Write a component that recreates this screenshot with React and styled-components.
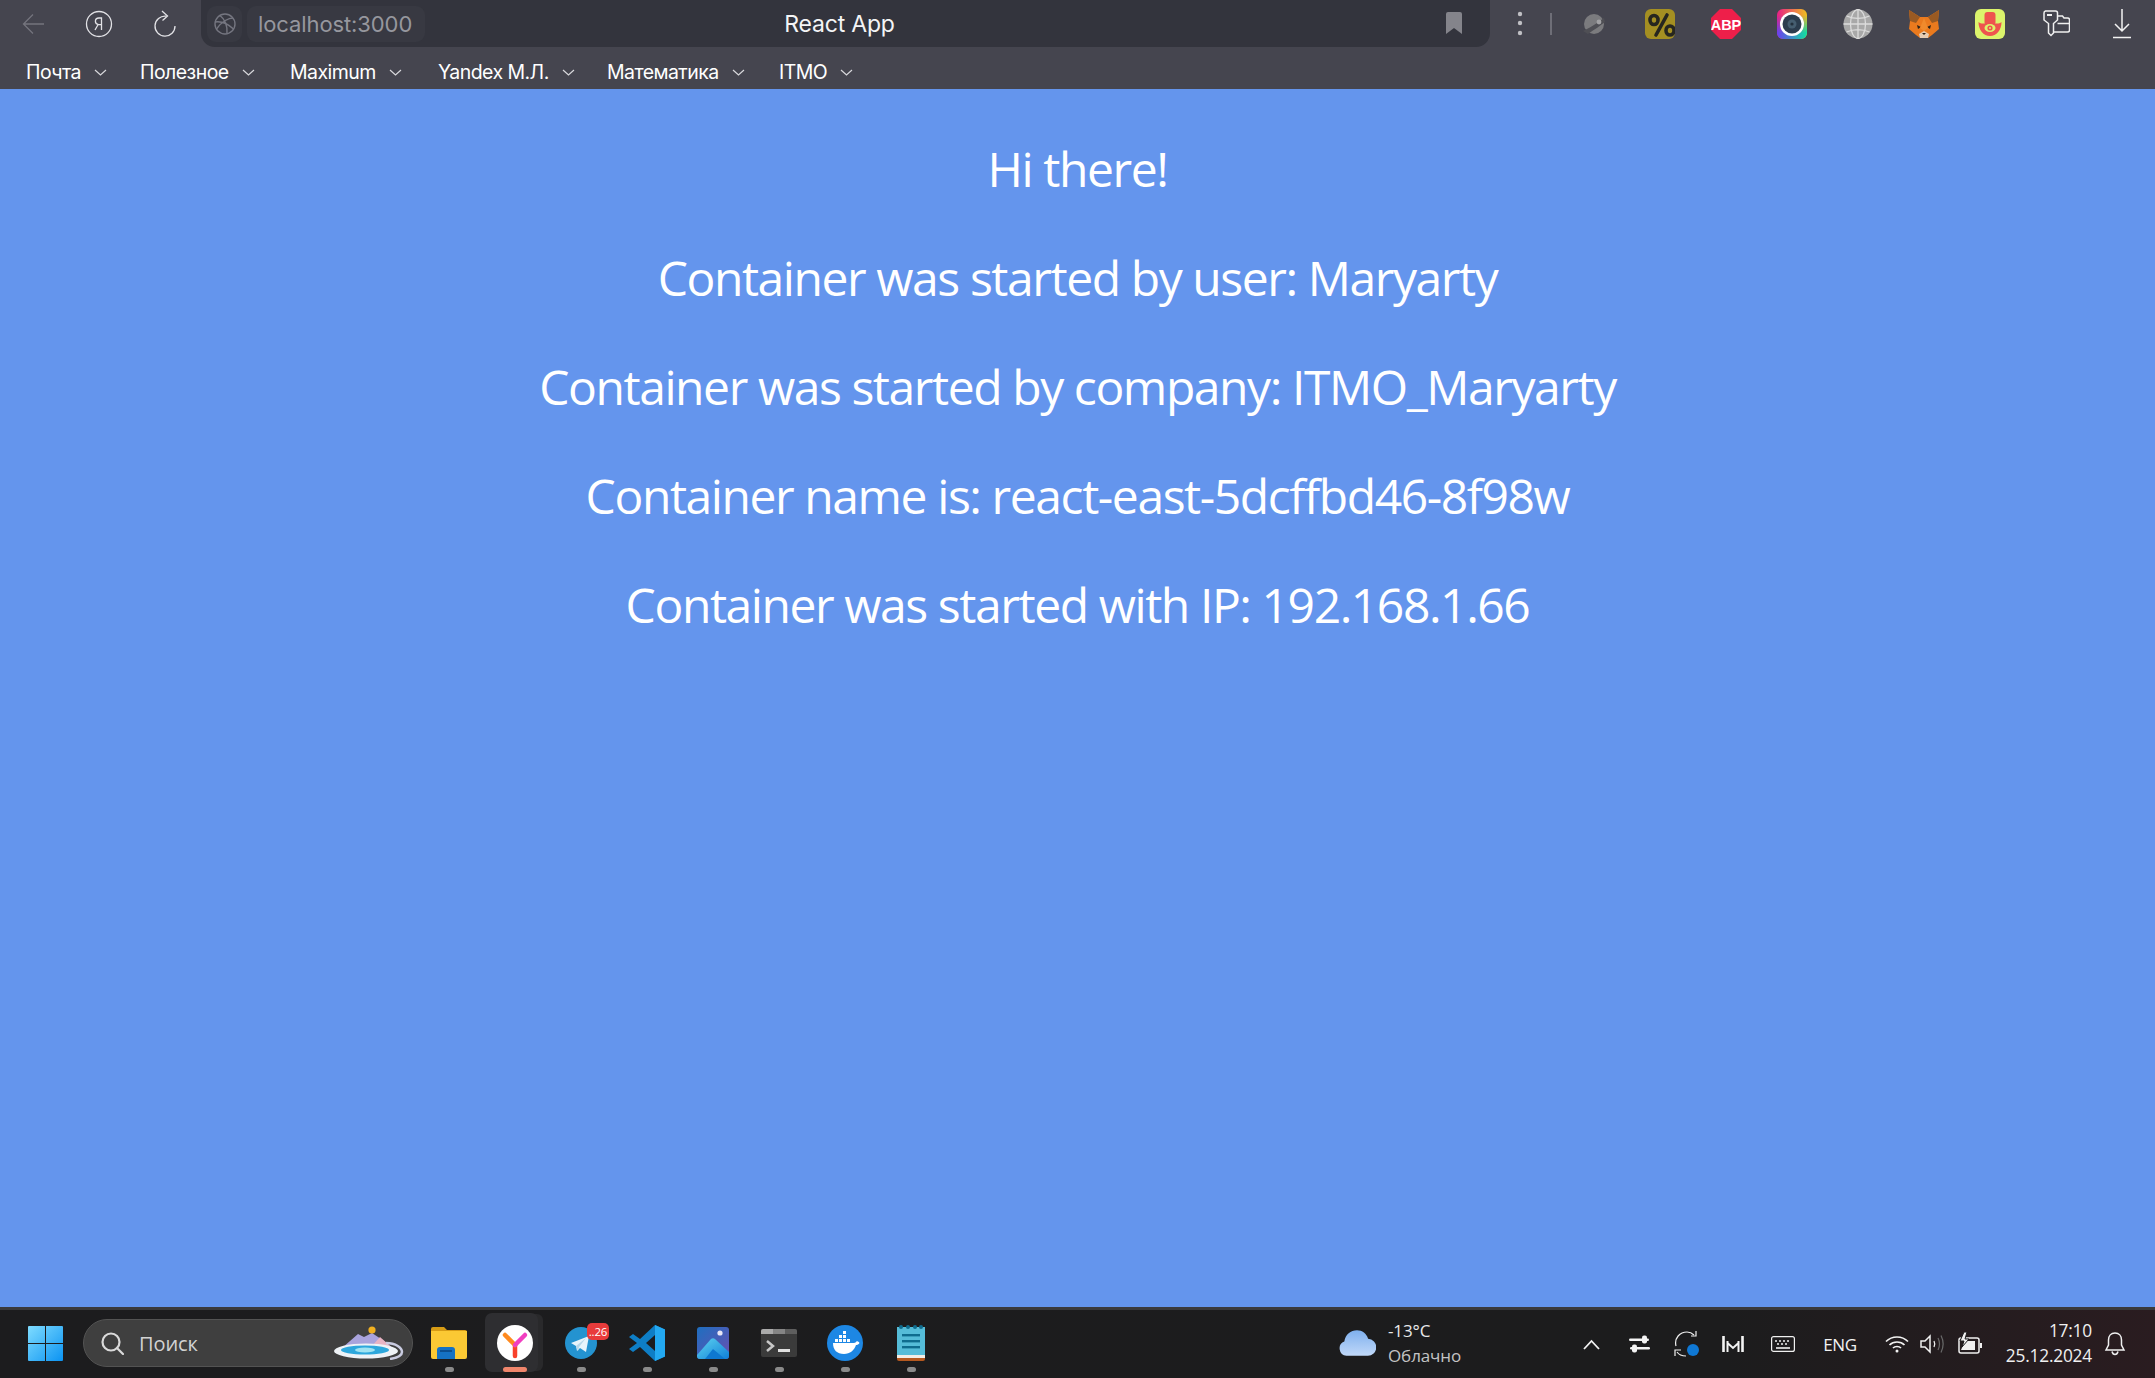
import React from "react";
import styled, { createGlobalStyle } from "styled-components";

const Global = createGlobalStyle`
  html, body { margin: 0; padding: 0; background: #6495ed; }
  body { overflow: hidden; }
  * { box-sizing: border-box; }
  svg { display: block; }
`;

const Page = styled.div`
  width: 2155px;
  height: 1378px;
  display: flex;
  flex-direction: column;
  font-family: "Inter", "Liberation Sans", sans-serif;
`;

/* ---------- browser chrome ---------- */
const Chrome = styled.header`
  height: 89px;
  flex: none;
  background: #45454f;
  display: flex;
  flex-direction: column;
`;
const ToolRow = styled.div`
  height: 47px;
  display: flex;
  align-items: stretch;
`;
const ToolSlot = styled.div`
  width: ${(p) => p.$w || 66}px;
  flex: none;
  display: flex;
  align-items: center;
  justify-content: center;
`;
const AddressBar = styled.div`
  width: 1289px;
  margin-left: 3px;
  flex: none;
  background: #33343d;
  border-radius: 0 0 14px 14px;
  display: grid;
  grid-template-columns: 1fr auto 1fr;
  align-items: center;
  padding: 0 18px 0 6px;
`;
const AddressLeft = styled.div`
  display: flex;
  gap: 5px;
  align-items: center;
`;
const Chip = styled.div`
  height: 36px;
  background: #383942;
  border-radius: 9px;
  display: flex;
  align-items: center;
`;
const GlobeChip = styled(Chip)`
  width: 35px;
  justify-content: center;
`;
const UrlChip = styled(Chip)`
  width: 178px;
  padding-left: 11px;
  color: #96979e;
  font-size: 22px;
  letter-spacing: -0.1px;
`;
const PageTitle = styled.div`
  color: #f4f4f6;
  font-size: 23px;
  letter-spacing: -0.2px;
`;
const BookmarkSlot = styled.div`
  justify-self: end;
  margin-right: 10px;
`;
const Separator = styled.div`
  width: 2px;
  height: 22px;
  background: #6e6e77;
  align-self: center;
  margin-right: 9px;
  flex: none;
`;
const BookmarkRow = styled.nav`
  height: 42px;
  display: flex;
  align-items: flex-start;
  padding: 12px 0 0 26px;
`;
const BookmarkItem = styled.div`
  width: ${(p) => p.$w}px;
  height: 26px;
  flex: none;
  display: flex;
  align-items: center;
  gap: 13px;
  color: #fff;
  font-size: 19.5px;
  letter-spacing: -0.55px;
`;

/* ---------- content ---------- */
const Main = styled.main`
  flex: 1;
  background: #6495ed;
  padding-top: 48px;
  display: flex;
  flex-direction: column;
  gap: 45px;
`;
const Line = styled.p`
  margin: 0;
  font-family: "Open Sans", "Noto Sans", sans-serif;
  font-weight: 400;
  font-size: 48px;
  line-height: 64px;
  letter-spacing: -1.42px;
  color: #fff;
  text-align: center;
`;

/* ---------- taskbar ---------- */
const Taskbar = styled.footer`
  height: 71px;
  flex: none;
  border-top: 3px solid #3a3a3c;
  background: linear-gradient(90deg, #1c1c1e 0%, #1c1c1d 80%, #2a1c20 100%);
  display: flex;
  align-items: flex-start;
  padding-left: 12px;
`;
const StartSlot = styled.div`
  width: 66px;
  padding-top: 16px;
  display: flex;
  justify-content: center;
  flex: none;
`;
const SearchPill = styled.div`
  width: 330px;
  height: 48px;
  margin: 9px 3px 0 5px;
  flex: none;
  border-radius: 24px;
  background: #3f3f3f;
  border: 1px solid #535353;
  display: flex;
  align-items: center;
  padding: 0 8px 0 17px;
  color: #d2d2d2;
  font-family: "Open Sans", sans-serif;
  font-size: 20px;
  letter-spacing: -0.1px;
`;
const SearchLabel = styled.span`
  margin-left: 15px;
  flex: 1;
`;
const AppSlot = styled.div`
  position: relative;
  width: 66px;
  flex: none;
  padding-top: 15px;
  display: flex;
  flex-direction: column;
  align-items: center;
`;
const ActiveTile = styled.div`
  position: absolute;
  left: 3px;
  top: 3px;
  width: 53px;
  height: 59px;
  border-radius: 7px;
  background: #2e2e31;
  box-shadow: 6px 0 0 -1px #29292b;
`;
const AppIcon = styled.div`
  position: relative;
  width: 38px;
  height: 36px;
  display: flex;
  align-items: center;
  justify-content: center;
`;
const RunDot = styled.div`
  position: relative;
  margin-top: 6px;
  width: ${(p) => (p.$active ? 24 : 9)}px;
  height: 5px;
  border-radius: 3px;
  background: ${(p) => (p.$active ? "#f0866c" : "#8a8a8a")};
`;
const Badge = styled.span`
  position: absolute;
  right: -9px;
  top: -2px;
  width: 22px;
  height: 17px;
  border-radius: 5px;
  background: #e83b3b;
  color: #fff;
  font-family: "Open Sans", sans-serif;
  font-size: 11.5px;
  line-height: 17px;
  text-align: center;
  letter-spacing: -0.2px;
`;
const Weather = styled.div`
  margin-left: 394px;
  width: 229px;
  height: 66px;
  flex: none;
  display: flex;
  align-items: center;
  gap: 12px;
`;
const WeatherText = styled.div`
  display: flex;
  flex-direction: column;
  gap: 3px;
  font-family: "Open Sans", sans-serif;
  font-size: 17px;
  line-height: 22px;
  letter-spacing: -0.1px;
`;
const Temp = styled.span`
  color: #e8e8e8;
`;
const Sky = styled.span`
  color: #c4c4c4;
`;
const TraySlot = styled.div`
  width: ${(p) => p.$w}px;
  margin-left: ${(p) => p.$ml || 0}px;
  height: 68px;
  flex: none;
  display: flex;
  align-items: center;
  justify-content: center;
  color: #f2f2f2;
  font-family: "Open Sans", sans-serif;
  font-size: 17px;
  letter-spacing: -0.3px;
`;
const Clock = styled.div`
  width: 101px;
  height: 67px;
  flex: none;
  display: flex;
  flex-direction: column;
  justify-content: center;
  align-items: flex-end;
  gap: 3px;
  color: #f0f0f0;
  font-family: "Open Sans", sans-serif;
  font-size: 17.3px;
  line-height: 22px;
  letter-spacing: -0.2px;
`;

/* ---------- icons ---------- */
const Chevron = () => (
  <svg width="13" height="7" viewBox="0 0 13 7" fill="none" stroke="#d8d8dc" strokeWidth="1.2">
    <path d="M1 1l5.500 5L12 1" />
  </svg>
);
const BackIcon = () => (
  <svg width="22" height="22" viewBox="0 0 22 22" fill="none" stroke="#74747d" strokeWidth="1.3">
    <path d="M22 11H2M11 1.500L1.500 11l9.500 9.500" />
  </svg>
);
const YaIcon = () => (
  <svg width="28" height="28" viewBox="0 0 28 28" fill="none" stroke="#e2e2e6" strokeWidth="1.3">
    <circle cx="14" cy="14" r="12.500" />
    <path d="M16.500 20V8h-2.600c-2.200 0-3.500 1.400-3.500 3.300s1.200 3.100 3.200 3.300h2.900M13 14.800L10 20" />
  </svg>
);
const ReloadIcon = () => (
  <svg width="24" height="28" viewBox="0 0 24 28" fill="none" stroke="#e2e2e6" strokeWidth="1.300">
    <path d="M13 6.200A10 10 0 1 0 22 16" />
    <path d="M9 1l5.500 5-5 4.500" />
  </svg>
);
const GlobeIcon = () => (
  <svg width="22" height="22" viewBox="0 0 22 22" fill="none" stroke="#757680" strokeWidth="1.400">
    <circle cx="11" cy="11" r="10" />
    <path d="M6 2.500c4 3 7.500 9 7 18M19 5c-4 0-11 3-16.500 11M1 9c6-1 13 2 18.500 7" />
  </svg>
);
const BookmarkIcon = () => (
  <svg width="16" height="24" viewBox="0 0 16 24">
    <path d="M2 0h12a2 2 0 0 1 2 2v20l-8-6-8 6V2a2 2 0 0 1 2-2z" fill="#84848b" />
  </svg>
);
const DotsIcon = () => (
  <svg width="6" height="28" viewBox="0 0 6 28" fill="#c0c0c4">
    <circle cx="3" cy="4" r="2.200" />
    <circle cx="3" cy="13" r="2.200" />
    <circle cx="3" cy="23" r="2.200" />
  </svg>
);
const PlanetIcon = () => (
  <svg width="22" height="22" viewBox="0 0 22 22">
    <circle cx="11" cy="11" r="10" fill="#7b7b7e" />
    <path d="M0 18C6 15 15 10 21 5l1 4c-5 4-10 7-17 12z" fill="#4f4f55" />
    <circle cx="16" cy="9" r="2.400" fill="#a2a2a5" />
  </svg>
);
const PercentTile = () => (
  <svg width="30" height="30" viewBox="0 0 30 30">
    <rect width="30" height="30" rx="6" fill="#a48f22" />
    <g fill="none" stroke="#26261f" strokeWidth="3.600" strokeLinecap="round">
      <ellipse cx="9" cy="11" rx="4" ry="4.500" />
      <ellipse cx="25" cy="21.500" rx="4" ry="4.500" />
      <path d="M22 6L11 26" />
    </g>
  </svg>
);
const AbpIcon = () => (
  <svg width="30" height="30" viewBox="0 0 30 30">
    <path d="M9 0h12l9 9v12l-9 9H9l-9-9V9z" fill="#ee1f4a" />
    <text x="15" y="20.500" textAnchor="middle" fontFamily="Liberation Sans" fontWeight="700" fontSize="14.500" fill="#fff" letterSpacing="-0.1">ABP</text>
  </svg>
);
const LensIcon = () => (
  <svg width="30" height="30" viewBox="0 0 30 30">
    <defs>
      <linearGradient id="lensTop" x1="0" y1="0" x2="1" y2="0">
        <stop offset="0" stopColor="#e81e86" />
        <stop offset="1" stopColor="#f0c020" />
      </linearGradient>
      <linearGradient id="lensBottom" x1="0" y1="0" x2="1" y2="0">
        <stop offset="0" stopColor="#6a3ef0" />
        <stop offset="1" stopColor="#10e0a0" />
      </linearGradient>
      <linearGradient id="lensFade" x1="0" y1="0" x2="0" y2="1">
        <stop offset="0.2" stopColor="#000" />
        <stop offset="0.8" stopColor="#fff" />
      </linearGradient>
      <mask id="lensMask">
        <rect width="30" height="30" fill="url(#lensFade)" />
      </mask>
    </defs>
    <rect width="30" height="30" rx="6" fill="url(#lensTop)" />
    <rect width="30" height="30" rx="6" fill="url(#lensBottom)" mask="url(#lensMask)" />
    <circle cx="15" cy="15" r="12" fill="#fff" />
    <circle cx="15" cy="15" r="9.500" fill="#2b3d4e" />
    <circle cx="15" cy="15" r="4.500" fill="#455e70" />
    <circle cx="15" cy="15" r="1.600" fill="#22303c" />
  </svg>
);
const WebIcon = () => (
  <svg width="30" height="30" viewBox="0 0 30 30" fill="none">
    <circle cx="15" cy="15" r="14.500" fill="#a8a8a8" />
    <g stroke="#dcdcdc" strokeWidth="1.300">
      <path d="M15 .5v29M.5 15h29M3.500 7c7 3 16 3 23 0M3.500 23c7-3 16-3 23 0" />
      <ellipse cx="15" cy="15" rx="7.500" ry="14.500" />
    </g>
  </svg>
);
const FoxIcon = () => (
  <svg width="30" height="30" viewBox="0 0 30 30">
    <path d="M0 1l11 7h8L30 1l-1 11 1 8-7 6-4 3h-8l-4-3-7-6 1-8z" fill="#ea7a1e" />
    <path d="M0 1l11 7-4 6-6-2zM30 1L19 8l4 6 6-2z" fill="#9a5a22" />
    <path d="M11 29l-1-4 5-3 5 3-1 4z" fill="#e6ccb2" />
    <path d="M8 16l4 2-3 2zM22 16l-4 2 3 2z" fill="#2d2218" />
    <path d="M13 24h4l-2 2z" fill="#2d2218" />
    <path d="M15 9l-4 10 4 3 4-3z" fill="#f08a2c" />
  </svg>
);
const HandIcon = () => (
  <svg width="30" height="30" viewBox="0 0 30 30">
    <rect width="30" height="30" rx="6" fill="#dcf46c" />
    <rect x="9.500" y="3" width="11" height="13" rx="3" fill="#ee544e" />
    <path d="M3.500 13c3 2.500 6 1 11.500 1s8.500 1.500 11.500-1c0 8-5 14-11.500 14S3.500 21 3.500 13z" fill="#ee544e" />
    <ellipse cx="15" cy="19" rx="5.500" ry="4" fill="#dcf46c" />
    <circle cx="15" cy="19" r="2.600" fill="#ee544e" />
    <circle cx="15" cy="19" r="1" fill="#dcf46c" />
  </svg>
);
const KeyIcon = () => (
  <svg width="27" height="27" viewBox="0 0 27 27" fill="none" stroke="#f0f0f0" strokeWidth="1.500">
    <path d="M2.500 1h10a2 2 0 0 1 2 2v7l-4 3.500V23L8 25.500 5.500 23V13.500L1 10V3a2 2 0 0 1 1.500-2z" />
    <path d="M4 5h5" strokeWidth="2" />
    <path d="M14.500 6h5l1.500 2h3.500a2 2 0 0 1 2 2v10a2 2 0 0 1-2 2h-14" />
    <path d="M14.500 13.500H26" />
  </svg>
);
const DownloadIcon = () => (
  <svg width="20" height="30" viewBox="0 0 20 30" fill="none" stroke="#f2f2f2" strokeWidth="1.500">
    <path d="M10 0v22M3 15l7 7 7-7M1 28.500h18" />
  </svg>
);

const WinLogo = () => (
  <svg width="35" height="35" viewBox="0 0 35 35">
    <defs>
      <linearGradient id="winG" x1="0" y1="0" x2="1" y2="1">
        <stop offset="0" stopColor="#7fdcff" />
        <stop offset="1" stopColor="#0b93f2" />
      </linearGradient>
    </defs>
    <path d="M1 0h16v17H0V1a1 1 0 0 1 1-1zM18 0h16a1 1 0 0 1 1 1v16H18zM0 18h17v17H1a1 1 0 0 1-1-1zM18 18h17v16a1 1 0 0 1-1 1H18z" fill="url(#winG)" />
  </svg>
);
const SearchGlass = () => (
  <svg width="23" height="23" viewBox="0 0 23 23" fill="none" stroke="#dadada" strokeWidth="2.200">
    <circle cx="10" cy="10" r="8.500" />
    <path d="M16 16l6 6" strokeLinecap="round" />
  </svg>
);
const SearchScene = () => (
  <svg width="70" height="34" viewBox="0 0 70 34">
    <path d="M8 22l16-14 6 3 8-4 12 8 10 8z" fill="#a9a3dc" />
    <path d="M38 20l8-9 8 7 6 6z" fill="#e8b4c4" />
    <circle cx="38" cy="4" r="3.600" fill="#f0b020" />
    <ellipse cx="32" cy="25" rx="32" ry="7.500" fill="#eef2f6" />
    <ellipse cx="31" cy="24" rx="24" ry="4.600" fill="#2da7dc" />
    <ellipse cx="31" cy="24" rx="10" ry="2.600" fill="#9fe3f2" />
    <path d="M52 17c10 0 16 5 16 9s-6 6-12 7" fill="none" stroke="#c9cbe0" strokeWidth="2.500" />
  </svg>
);
const FolderIcon = () => (
  <svg width="36" height="32" viewBox="0 0 36 32">
    <path d="M2 0h11l3 3h18a2 2 0 0 1 2 2v4H0V2a2 2 0 0 1 2-2z" fill="#d79c15" />
    <path d="M0 4h36v26a2 2 0 0 1-2 2H2a2 2 0 0 1-2-2z" fill="#fbc934" />
    <path d="M6 32v-9a3 3 0 0 1 3-3h12a3 3 0 0 1 3 3v9z" fill="#1572c4" />
    <path d="M9 24h12" stroke="#0c4f90" strokeWidth="2" />
  </svg>
);
const YandexIcon = () => (
  <svg width="36" height="36" viewBox="0 0 36 36" fill="none">
    <circle cx="18" cy="18" r="18" fill="#fff" />
    <path d="M18 20V31" stroke="#f8412b" strokeWidth="4.500" strokeLinecap="round" />
    <path d="M8 10l10 10" stroke="#ff8a1f" strokeWidth="4.500" strokeLinecap="round" />
    <path d="M28 10L18 20" stroke="#f13fc0" strokeWidth="4.500" strokeLinecap="round" />
  </svg>
);
const TelegramIcon = () => (
  <svg width="32" height="32" viewBox="0 0 32 32">
    <circle cx="16" cy="16" r="16" fill="#2493d0" />
    <path d="M6 16l18-7-3 16-6-4-3 3-1-5z" fill="#e8f4fb" />
    <path d="M11 19l10-8-7 9-1 4z" fill="#b8d8ea" />
  </svg>
);
const VsCodeIcon = () => (
  <svg width="36" height="36" viewBox="0 0 36 36">
    <path d="M26 0l10 4.500v27L26 36 11 22l-7 5-4-3 8-6-8-6 4-3 7 5z" fill="#0e7ec6" />
    <path d="M26 0l10 4.500v27L26 36z" fill="#23a9f2" />
    <path d="M26 10l-9 8 9 8z" fill="#1c1c1e" />
  </svg>
);
const PhotosIcon = () => (
  <svg width="32" height="32" viewBox="0 0 32 32">
    <defs>
      <linearGradient id="phG" x1="0" y1="0" x2="1" y2="1">
        <stop offset="0" stopColor="#1e6fc0" />
        <stop offset="1" stopColor="#6a4fb0" />
      </linearGradient>
      <linearGradient id="phM" x1="0" y1="0" x2="1" y2="1">
        <stop offset="0" stopColor="#5fd4f0" />
        <stop offset="1" stopColor="#0f7fd8" />
      </linearGradient>
    </defs>
    <rect width="32" height="32" rx="3" fill="url(#phG)" />
    <circle cx="23" cy="6" r="2.600" fill="#e8e6f6" />
    <path d="M0 28l14-16c1-1 3-1 4 0l14 13v4a3 3 0 0 1-3 3H3a3 3 0 0 1-3-3z" fill="url(#phM)" />
    <path d="M8 32l8-10 12 10z" fill="#0e78d0" />
  </svg>
);
const TerminalIcon = () => (
  <svg width="36" height="28" viewBox="0 0 36 28">
    <rect width="36" height="28" rx="2" fill="#3b3b3b" />
    <path d="M0 2a2 2 0 0 1 2-2h10v5H0z" fill="#aaa" />
    <path d="M12 0h12v5H12z" fill="#858585" />
    <path d="M24 0h10a2 2 0 0 1 2 2v3H24z" fill="#5e5e5e" />
    <path d="M6 12l6 5-6 5" fill="none" stroke="#c8c8c8" strokeWidth="2.500" />
    <path d="M17 20h12v3H17z" fill="#e0e0e0" />
  </svg>
);
const DockerIcon = () => (
  <svg width="36" height="36" viewBox="0 0 36 36">
    <circle cx="18" cy="18" r="18" fill="#1d87e4" />
    <path d="M6 18h21c1 0 2-1 3-2 1 .5 2 1 2.500 2-1 1.500-2 2-3.500 2-1.500 5-6 9-12 9-7 0-11-4-11-11z" fill="#fff" />
    <g fill="#fff">
      <rect x="8" y="14" width="3" height="3" />
      <rect x="12" y="14" width="3" height="3" />
      <rect x="16" y="14" width="3" height="3" />
      <rect x="20" y="14" width="3" height="3" />
      <rect x="12" y="10" width="3" height="3" />
      <rect x="16" y="10" width="3" height="3" />
      <rect x="16" y="6" width="3" height="3" />
    </g>
  </svg>
);
const NotepadIcon = () => (
  <svg width="28" height="36" viewBox="0 0 28 36">
    <rect y="2" width="28" height="30" fill="#55bcd8" />
    <path d="M0 30h28v3H0z" fill="#f2ede6" />
    <path d="M0 33h28v1a2 2 0 0 1-2 2H2a2 2 0 0 1-2-2z" fill="#b4581f" />
    <g fill="#0f6c8e">
      <circle cx="4" cy="2" r="2" />
      <circle cx="11" cy="2" r="2" />
      <circle cx="18" cy="2" r="2" />
      <circle cx="24" cy="2" r="2" />
      <rect x="5" y="9" width="18" height="2.400" />
      <rect x="5" y="15" width="18" height="2.400" />
      <rect x="5" y="21" width="18" height="2.400" />
    </g>
  </svg>
);
const CloudIcon = () => (
  <svg width="38" height="26" viewBox="0 0 36 24">
    <defs>
      <linearGradient id="clG" x1="0" y1="0" x2="0" y2="1">
        <stop offset="0" stopColor="#7fb0ee" />
        <stop offset="1" stopColor="#c0d8f8" />
      </linearGradient>
    </defs>
    <path d="M8 24a7 7 0 0 1-2-13.500C7 4 12 0 18 0c5 0 9 3 10.500 8A8 8 0 0 1 28 24z" fill="url(#clG)" />
  </svg>
);
const CaretUp = () => (
  <svg width="17" height="11" viewBox="0 0 17 11" fill="none" stroke="#f2f2f2" strokeWidth="1.800">
    <path d="M1 10l7.500-8L16 10" />
  </svg>
);
const SlidersIcon = () => (
  <svg width="21" height="18" viewBox="0 0 21 18" fill="#f4f4f4">
    <rect x="0" y="3.500" width="20" height="2.600" rx="1.300" />
    <rect x="1" y="12" width="20" height="2.600" rx="1.300" />
    <rect x="13" y="0.500" width="5" height="8" rx="2" />
    <rect x="3" y="9.500" width="5" height="8" rx="2" />
  </svg>
);
const SyncIcon = () => (
  <svg width="26" height="26" viewBox="0 0 26 26" fill="none">
    <path d="M2 15C0 7 6 1 13 1c3 0 5 1 7 3" stroke="#f0f0f0" strokeWidth="1.200" />
    <path d="M22 0v5h-5" stroke="#f0f0f0" strokeWidth="1.200" />
    <path d="M3 21c2 3 5 4 9 4" stroke="#f0f0f0" strokeWidth="1.200" />
    <path d="M1 25v-6h6" stroke="#f0f0f0" strokeWidth="1.200" />
    <circle cx="19" cy="19" r="6" fill="#0f78d4" />
  </svg>
);
const MIcon = () => (
  <svg width="22" height="16" viewBox="0 0 22 16" fill="none" stroke="#f4f4f4">
    <path d="M1.500 0v16M20.500 0v16" strokeWidth="2.600" />
    <path d="M5.500 7l5.500 5 5.500-5M5.500 5v11M16.500 5v11" strokeWidth="2" />
  </svg>
);
const KeyboardIcon = () => (
  <svg width="24" height="16" viewBox="0 0 24 16" fill="none" stroke="#f0f0f0" strokeWidth="1.200">
    <rect x="0.600" y="0.600" width="22.800" height="14.800" rx="2" />
    <path d="M5 12h14" strokeWidth="1.600" />
    <path d="M4 5h2M8 5h2M12 5h2M16 5h2M6 8h2M10 8h2M14 8h2" strokeWidth="1.600" />
  </svg>
);
const WifiIcon = () => (
  <svg width="24" height="18" viewBox="0 0 24 18" fill="none" stroke="#f2f2f2" strokeWidth="1.700">
    <path d="M1 6.500c6-6 16-6 22 0M4.500 10c4-4 11-4 15 0M8 13c2-2 6-2 8 0" />
    <circle cx="12" cy="16" r="1.500" fill="#f2f2f2" stroke="none" />
  </svg>
);
const SpeakerIcon = () => (
  <svg width="24" height="20" viewBox="0 0 24 20" fill="none">
    <path d="M1 7h4l5-5v16l-5-5H1z" stroke="#f0f0f0" strokeWidth="1.500" />
    <path d="M14 7c1 2 1 4 0 6" stroke="#f0f0f0" strokeWidth="1.300" />
    <path d="M18 4c2 4 2 8 0 12M21 1.500c3 6 3 11 0 17" stroke="#6a6a6a" strokeWidth="1.200" />
  </svg>
);
const BatteryIcon = () => (
  <svg width="26" height="24" viewBox="0 0 26 24" fill="none">
    <path d="M4 6h16a2 2 0 0 1 2 2v11a2 2 0 0 1-2 2H4a2 2 0 0 1-2-2V8a2 2 0 0 1 2-2z" stroke="#f0f0f0" strokeWidth="1.500" />
    <path d="M23 11h2v5h-2z" fill="#f0f0f0" />
    <path d="M8 9h10v9H4z" fill="#f0f0f0" />
    <path d="M7 0L3 9h4l-2 6 7-8H8l2-7z" fill="#f0f0f0" stroke="#1c1c1e" strokeWidth="1" />
  </svg>
);
const BellIcon = () => (
  <svg width="22" height="24" viewBox="0 0 22 24" fill="none" stroke="#f0f0f0" strokeWidth="1.500">
    <path d="M11 1c-4 0-6.500 3-6.500 7v5L2 18h18l-2.500-5V8c0-4-2.500-7-6.500-7z" />
    <path d="M8 19.500c.5 2 1.500 3 3 3s2.500-1 3-3" />
  </svg>
);

const bookmarks = [
  { name: "Почта", w: 114 },
  { name: "Полезное", w: 150 },
  { name: "Maximum", w: 148 },
  { name: "Yandex М.Л.", w: 169 },
  { name: "Математика", w: 172 },
  { name: "ITMO", w: 100 },
];
const lines = [
  "Hi there!",
  "Container was started by user: Maryarty",
  "Container was started by company: ITMO_Maryarty",
  "Container name is: react-east-5dcffbd46-8f98w",
  "Container was started with IP: 192.168.1.66",
];
const extensions = [PlanetIcon, PercentTile, AbpIcon, LensIcon, WebIcon, FoxIcon, HandIcon, KeyIcon, DownloadIcon];

export default function App() {
  return (
    <Page>
      <Global />
      <Chrome>
        <ToolRow>
          <ToolSlot><BackIcon /></ToolSlot>
          <ToolSlot><YaIcon /></ToolSlot>
          <ToolSlot><ReloadIcon /></ToolSlot>
          <AddressBar>
            <AddressLeft>
              <GlobeChip><GlobeIcon /></GlobeChip>
              <UrlChip>localhost:3000</UrlChip>
            </AddressLeft>
            <PageTitle>React App</PageTitle>
            <BookmarkSlot><BookmarkIcon /></BookmarkSlot>
          </AddressBar>
          <ToolSlot $w={60}><DotsIcon /></ToolSlot>
          <Separator />
          {extensions.map((Icon, i) => (
            <ToolSlot key={i}><Icon /></ToolSlot>
          ))}
        </ToolRow>
        <BookmarkRow>
          {bookmarks.map((b) => (
            <BookmarkItem key={b.name} $w={b.w}>
              {b.name}
              <Chevron />
            </BookmarkItem>
          ))}
        </BookmarkRow>
      </Chrome>
      <Main>
        {lines.map((l) => (
          <Line key={l}>{l}</Line>
        ))}
      </Main>
      <Taskbar>
        <StartSlot><WinLogo /></StartSlot>
        <SearchPill>
          <SearchGlass />
          <SearchLabel>Поиск</SearchLabel>
          <SearchScene />
        </SearchPill>
        <AppSlot><AppIcon><FolderIcon /></AppIcon><RunDot /></AppSlot>
        <AppSlot>
          <ActiveTile />
          <AppIcon><YandexIcon /></AppIcon>
          <RunDot $active />
        </AppSlot>
        <AppSlot>
          <AppIcon>
            <TelegramIcon />
            <Badge>..26</Badge>
          </AppIcon>
          <RunDot />
        </AppSlot>
        <AppSlot><AppIcon><VsCodeIcon /></AppIcon><RunDot /></AppSlot>
        <AppSlot><AppIcon><PhotosIcon /></AppIcon><RunDot /></AppSlot>
        <AppSlot><AppIcon><TerminalIcon /></AppIcon><RunDot /></AppSlot>
        <AppSlot><AppIcon><DockerIcon /></AppIcon><RunDot /></AppSlot>
        <AppSlot><AppIcon><NotepadIcon /></AppIcon><RunDot /></AppSlot>
        <Weather>
          <CloudIcon />
          <WeatherText>
            <Temp>-13°C</Temp>
            <Sky>Облачно</Sky>
          </WeatherText>
        </Weather>
        <TraySlot $w={48}><CaretUp /></TraySlot>
        <TraySlot $w={48}><SlidersIcon /></TraySlot>
        <TraySlot $w={48}><SyncIcon /></TraySlot>
        <TraySlot $w={44}><MIcon /></TraySlot>
        <TraySlot $w={56}><KeyboardIcon /></TraySlot>
        <TraySlot $w={58}>ENG</TraySlot>
        <TraySlot $w={36} $ml={10}><WifiIcon /></TraySlot>
        <TraySlot $w={34}><SpeakerIcon /></TraySlot>
        <TraySlot $w={42}><BatteryIcon /></TraySlot>
        <Clock>
          <span>17:10</span>
          <span>25.12.2024</span>
        </Clock>
        <TraySlot $w={46}><BellIcon /></TraySlot>
      </Taskbar>
    </Page>
  );
}
